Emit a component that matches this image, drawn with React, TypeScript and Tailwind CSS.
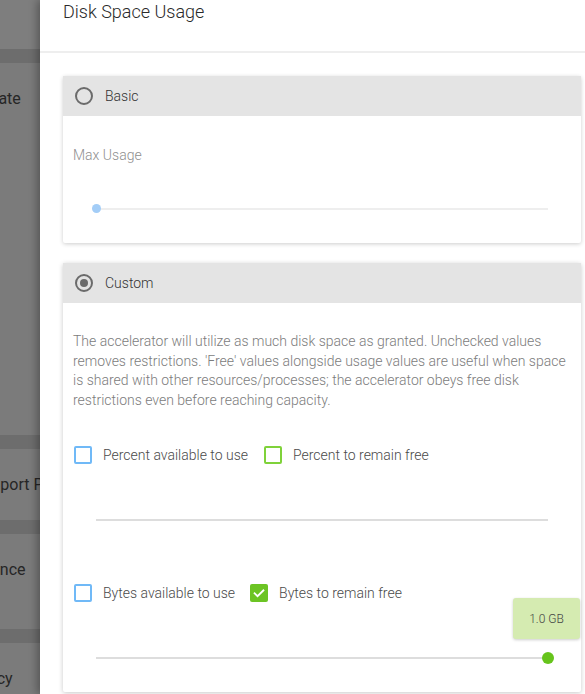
import * as React from "react";

const font = { fontFamily: "Roboto, 'Noto Sans', Arial, sans-serif" };

function SideRow({ label, offset, height }: { label: string; offset: string; height: string }) {
  return (
    <>
      <div className="h-[14px] shrink-0 bg-[#6d6d6d]" />
      <div className={`${height} shrink-0 overflow-hidden bg-[#7b7b7b] pt-[27px]`}>
        <div className={`${offset} whitespace-nowrap text-[16px] leading-[18px] text-[#262626]`}>{label}</div>
      </div>
    </>
  );
}

function Radio({ checked }: { checked: boolean }) {
  return (
    <span className="flex h-[18px] w-[18px] items-center justify-center rounded-full border-2 border-[#6b6b6b]">
      {checked ? <span className="h-[8px] w-[8px] rounded-full bg-[#6b6b6b]" /> : null}
    </span>
  );
}

function CheckBox({ color, checked }: { color: "blue" | "green"; checked?: boolean }) {
  if (checked) {
    return (
      <span className="flex h-[18px] w-[18px] shrink-0 items-center justify-center rounded-[2px] bg-[#6cc424]">
        <svg width="14" height="14" viewBox="0 0 24 24" fill="none" stroke="white" strokeWidth="3.2" strokeLinecap="square">
          <path d="M4.5 12.5l5 5 10-10" />
        </svg>
      </span>
    );
  }
  return (
    <span
      className={
        color === "blue"
          ? "h-[18px] w-[18px] shrink-0 rounded-[2px] border-2 border-[#70b9f7]"
          : "h-[18px] w-[18px] shrink-0 rounded-[2px] border-2 border-[#7fd23a]"
      }
    />
  );
}

function CheckItem({ color, checked, label }: { color: "blue" | "green"; checked?: boolean; label: string }) {
  return (
    <label className="flex items-center gap-[11px]">
      <CheckBox color={color} checked={checked} />
      <span className="text-[14px] font-light leading-[20px] text-[#4a4a4a]">{label}</span>
    </label>
  );
}

function CardHeader({ label, checked }: { label: string; checked: boolean }) {
  return (
    <div className="flex h-[40px] items-center gap-[12px] bg-[#e4e4e4] pl-[12px]">
      <Radio checked={checked} />
      <span className="text-[14px] font-light text-[#333]">{label}</span>
    </div>
  );
}

export default function App() {
  return (
    <div className="flex h-[694px] w-[585px] overflow-hidden bg-white" style={font}>
      {/* dimmed settings list behind the drawer */}
      <div className="flex w-[40px] shrink-0 flex-col overflow-hidden bg-[#7b7b7b]">
        <div className="h-[49px] shrink-0 bg-[#7e7e7e]" />
        <SideRow label="Update" offset="ml-[-30px]" height="h-[372px]" />
        <SideRow label="Support Page" offset="ml-[-27px]" height="h-[71px]" />
        <SideRow label="Performance" offset="ml-[-67px]" height="h-[95px]" />
        <SideRow label="Privacy" offset="ml-[-39px]" height="h-[60px]" />
      </div>

      <div className="relative z-10 flex flex-1 flex-col bg-white shadow-[-3px_0_8px_rgba(0,0,0,0.3)]">
        <div className="h-[51px] shrink-0 pl-[23px] text-[18px] font-light leading-[24px] text-[#2a2a2a]">
          Disk Space Usage
        </div>
        <div className="h-[2px] shrink-0 bg-[#eeeeee]" />

        <div className="flex flex-col gap-[20px] pl-[23px] pr-[4px] pt-[23px]">
          <div className="rounded-[2px] bg-white shadow-[0_1px_4px_rgba(0,0,0,0.2)]">
            <CardHeader label="Basic" checked={false} />
            <div className="pb-[33px] pt-[29px]">
              <div className="pl-[10px] text-[14px] font-light leading-[20px] text-[#8f8f8f]">Max Usage</div>
              <div className="relative mx-[33px] mt-[43px] h-[2px] bg-[#eeeeee]">
                <span className="absolute left-[-4px] top-[-4px] h-[9px] w-[9px] rounded-full bg-[#a3cdf7]" />
              </div>
            </div>
          </div>

          <div className="relative rounded-[2px] bg-white shadow-[0_1px_5px_rgba(0,0,0,0.22)]">
            <CardHeader label="Custom" checked />
            <div className="pb-[33px] pt-[29px]">
              <p className="px-[10px] text-[14px] font-light leading-[19.5px] text-[#7c7c7c]">
                The accelerator will utilize as much disk space as granted. Unchecked values removes restrictions.
                'Free' values alongside usage values are useful when space is shared with other resources/processes;
                the accelerator obeys free disk restrictions even before reaching capacity.
              </p>

              <div className="mt-[35px] flex items-center gap-[16px] pl-[11px]">
                <CheckItem color="blue" label="Percent available to use" />
                <CheckItem color="green" label="Percent to remain free" />
              </div>
              <div className="mx-[33px] mt-[54px] h-[2px] bg-[#dddddd]" />

              <div className="mt-[62px] flex items-center gap-[15px] pl-[11px]">
                <CheckItem color="blue" label="Bytes available to use" />
                <CheckItem color="green" checked label="Bytes to remain free" />
              </div>
              <div className="relative mx-[33px] mt-[54px] h-[2px] bg-[#dddddd]">
                <span className="absolute right-[-6px] top-[-5px] h-[12px] w-[12px] rounded-full bg-[#66c41c]" />
                <div className="absolute bottom-[20px] right-[-32px] flex h-[41px] w-[67px] items-center justify-center rounded-[3px] bg-[#d5ebb1] text-[12px] font-light text-[#444] shadow-[0_1px_3px_rgba(0,0,0,0.2)]">
                  1.0 GB
                </div>
              </div>
            </div>
          </div>
        </div>
      </div>
    </div>
  );
}
